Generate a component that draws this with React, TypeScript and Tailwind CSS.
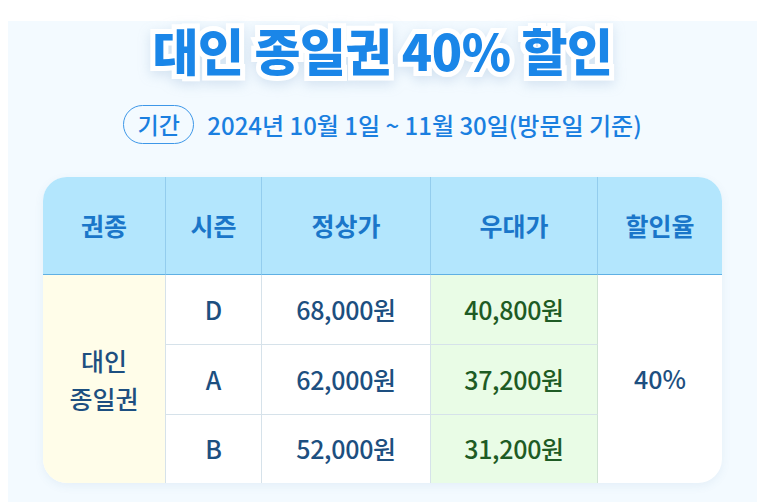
import React from "react";

const font = { fontFamily: '"Noto Sans CJK KR", "Noto Sans", sans-serif' };

type Row = { season: string; price: string; sale: string };

const rows: Row[] = [
  { season: "D", price: "68,000원", sale: "40,800원" },
  { season: "A", price: "62,000원", sale: "37,200원" },
  { season: "B", price: "52,000원", sale: "31,200원" },
];

const headers = ["권종", "시즌", "정상가", "우대가", "할인율"];

const App: React.FC = () => {
  return (
    <div className="w-[773px] h-[502px] bg-white pt-[21px] pl-[8px] pr-[16px] overflow-hidden" style={font}>
      <div className="h-full bg-[#f3faff] flex flex-col items-center">
        {/* 타이틀 */}
        <h1 className="mt-[3px] text-[50px] leading-[50px] font-black text-[#1a86e8] tracking-[-0.5px] [paint-order:stroke_fill] [-webkit-text-stroke:10px_white] drop-shadow-[0_4px_6px_rgba(120,160,200,0.25)]">
          대인 종일권 40% 할인
        </h1>

        {/* 기간 */}
        <div className="mt-[31px] flex items-center gap-[13px]">
          <span className="w-[71px] h-[39px] rounded-full border-[1.5px] border-[#3d97e8] flex items-center justify-center text-[23px] font-medium text-[#1a7fe0] leading-none">
            기간
          </span>
          <span className="text-[24px] font-medium text-[#1a7fe0] leading-none">
            2024년 10월 1일 ~ 11월 30일(방문일 기준)
          </span>
        </div>

        {/* 표 */}
        <div className="mt-[33px] w-[679px] rounded-[24px] overflow-hidden bg-white shadow-[0_3px_10px_rgba(60,110,160,0.08)]">
          <div className="grid grid-cols-[123px_96px_169px_167px_124px] grid-rows-[98px_70px_70px_68px]">
            {headers.map((h, i) => (
              <div
                key={h}
                className={`bg-[#b3e6fd] border-b-[1.5px] border-[#5fb0e4] flex items-center justify-center text-[25px] font-bold text-[#1a76c9] ${
                  i < headers.length - 1 ? "border-r border-r-[#93cdee]" : ""
                }`}>
                {h}
              </div>
            ))}

            <div className="row-span-3 bg-[#fffde9] border-r border-[#d6e2ea] flex items-center justify-center text-center text-[25px] font-medium leading-[38px] text-[#1d4f80]">
              대인
              <br />
              종일권
            </div>

            {rows.map((r, i) => (
              <React.Fragment key={r.season}>
                <div
                  className={`border-r border-[#d6e2ea] flex items-center justify-center text-[25px] font-medium text-[#1d4f80] ${
                    i < rows.length - 1 ? "border-b" : ""
                  }`}>
                  {r.season}
                </div>
                <div
                  className={`border-r border-[#d6e2ea] flex items-center justify-center text-[25px] font-medium text-[#1d4f80] tracking-[-0.3px] ${
                    i < rows.length - 1 ? "border-b" : ""
                  }`}>
                  {r.price}
                </div>
                <div
                  className={`bg-[#e9fce6] border-r border-[#cfe3d2] flex items-center justify-center text-[25px] font-medium text-[#1e5b24] tracking-[-0.3px] ${
                    i < rows.length - 1 ? "border-b border-b-[#d6e2ea]" : ""
                  }`}
                  style={{ gridColumn: 4, gridRow: i + 2 }}>
                  {r.sale}
                </div>
                {i === 0 && (
                  <div
                    className="flex items-center justify-center text-[25px] font-medium text-[#1d4f80]"
                    style={{ gridColumn: 5, gridRow: "2 / span 3" }}>
                    40%
                  </div>
                )}
              </React.Fragment>
            ))}
          </div>
        </div>
      </div>
    </div>
  );
};

export default App;
